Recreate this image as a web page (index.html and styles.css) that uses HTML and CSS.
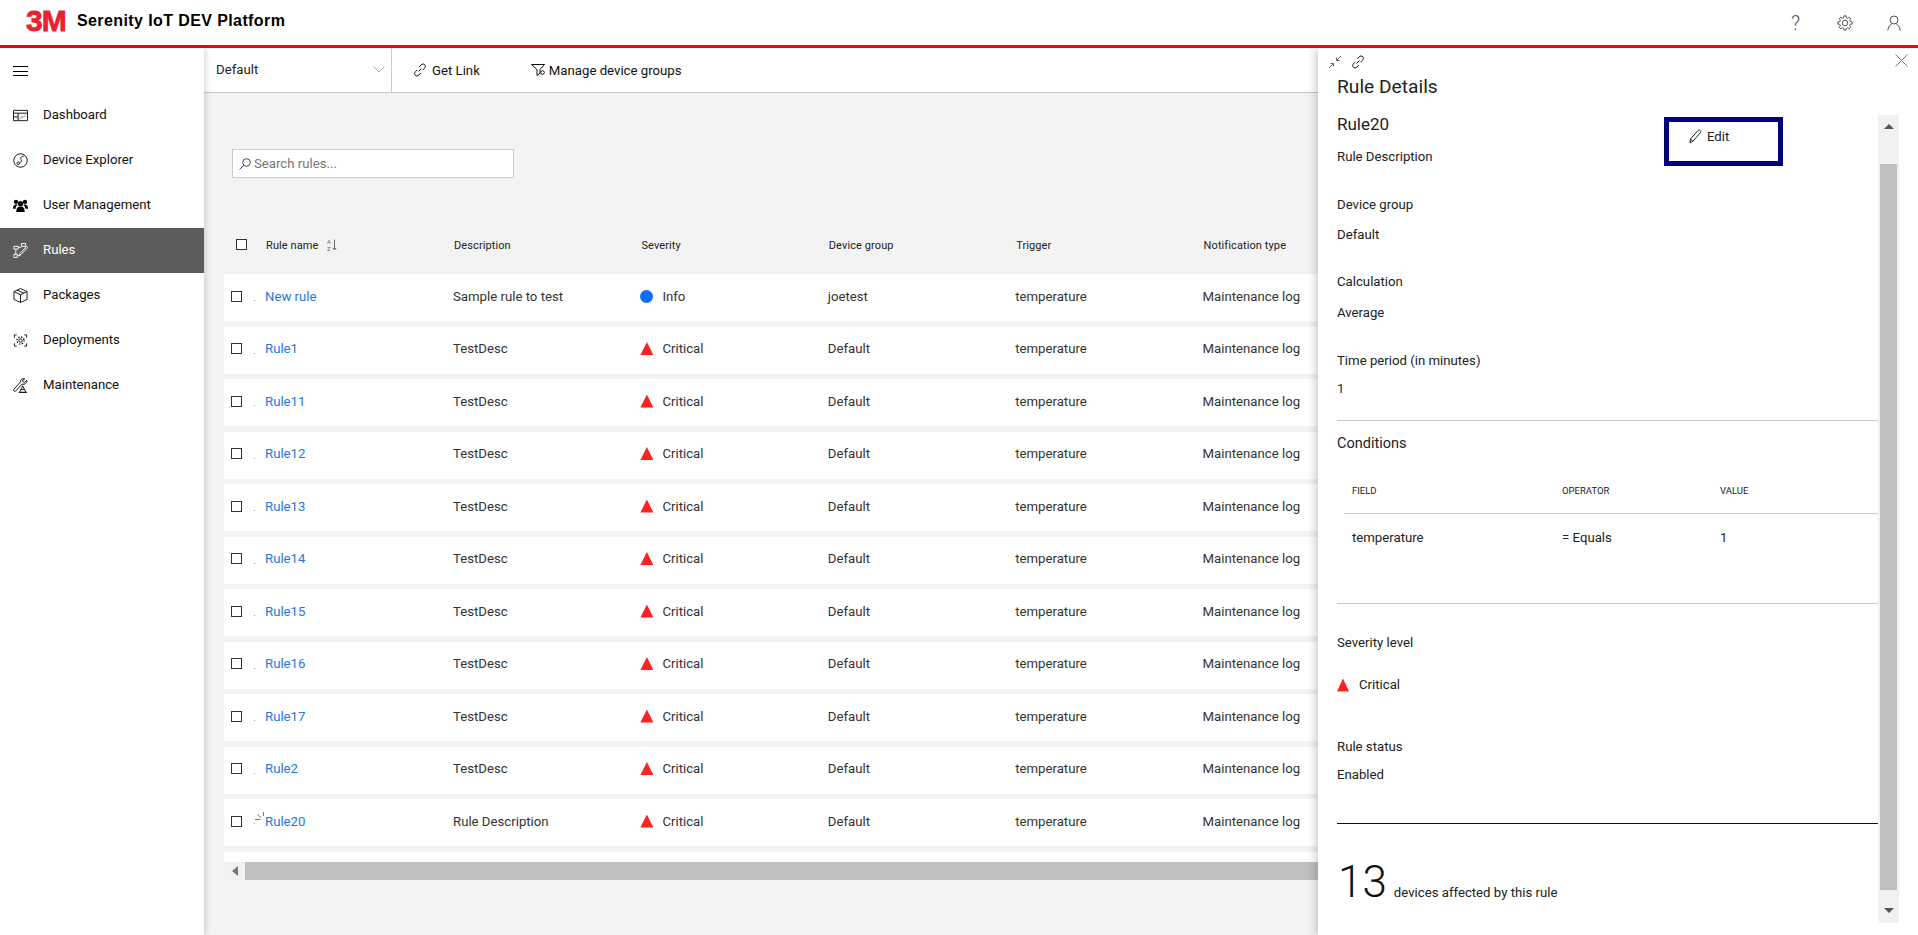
FILE: index.html
```html
<!DOCTYPE html>
<html lang="en">
<head>
  <meta charset="UTF-8">
  <meta name="viewport" content="width=device-width, initial-scale=1.0">
  <title>Serenity IoT DEV Platform</title>
  <link rel="stylesheet" href="styles.css">
</head>
<body>
  <header class="topbar">
    <span class="logo">3M</span>
    <span class="app-title">Serenity IoT DEV Platform</span>
    <div class="top-icons">
      <span class="help">?</span>
      <svg class="gear" width="16" height="16" viewBox="0 0 16 16"><polygon points="6.69,2.76 6.87,.89 9.13,.89 9.31,2.76 10.78,3.37 12.23,2.18 13.82,3.77 12.63,5.22 13.24,6.69 15.11,6.87 15.11,9.13 13.24,9.31 12.63,10.78 13.82,12.23 12.23,13.82 10.78,12.63 9.31,13.24 9.13,15.11 6.87,15.11 6.69,13.24 5.22,12.63 3.77,13.82 2.18,12.23 3.37,10.78 2.76,9.31 .89,9.13 .89,6.87 2.76,6.69 3.37,5.22 2.18,3.77 3.77,2.18 5.22,3.37"/><circle cx="8" cy="8" r="2.8"/></svg>
      <svg class="user" width="14" height="16" viewBox="0 0 14 16"><circle cx="7" cy="5" r="4"/><path d="M.8 15.5c.3-3.6 2.2-6 4-6.6M13.2 15.5c-.3-3.6-2.2-6-4-6.6"/></svg>
    </div>
  </header>

  <div class="layout">
    <nav class="sidebar">
      <div class="menu-btn"><span></span><span></span><span></span></div>
      <a class="nav-item">
        <svg class="nav-icon" viewBox="0 0 16 16"><path d="M.5 2.5h15v11H.5zM.5 5.5h15M5.5 5.5v8M.5 9.5h5"/><path class="soft" d="M7 12l2.5-3 1.5 1 3-3"/></svg>
        Dashboard
      </a>
      <a class="nav-item">
        <svg class="nav-icon" viewBox="0 0 16 16"><circle cx="8" cy="8" r="7.2"/><path d="M11.5 3.4C9 3.3 7.4 5 8.6 6.8c.9 1.5.2 3.1-1.6 3.4"/><circle cx="5.6" cy="11" r="1.4"/></svg>
        Device Explorer
      </a>
      <a class="nav-item">
        <svg class="nav-icon filled" viewBox="0 0 16 16"><circle cx="8" cy="6" r="2.8"/><circle cx="3.2" cy="4.2" r="2.3"/><circle cx="12.8" cy="4.2" r="2.3"/><path d="M3.5 15c0-4.4 1.6-6 4.5-6s4.5 1.6 4.5 6zM0 11.5C0 8.3 1.2 7 3.2 7c.7 0 1.2.1 1.7.5-1.3.9-2 2.2-2.1 4zM16 11.5C16 8.300 14.800 7 12.800 7c-.7 0-1.200.1-1.700.5 1.300.9 2 2.200 2.100 4z"/></svg>
        User Management
      </a>
      <a class="nav-item active">
        <svg class="nav-icon" viewBox="0 0 16 16"><path d="M9 .5h4.500v3H9zM1 3.500h4.500v3H1zM1 12h3.500v3.500H1zM5.500 4.500H9M3 6.500V12M4.500 13.500H8"/><path d="M7.500 11l7-7.500 1.200 1.200-7 7.500-2 .7z"/></svg>
        Rules
      </a>
      <a class="nav-item">
        <svg class="nav-icon" viewBox="0 0 16 16"><path d="M8 .6l7 3.200v8.400l-7 3.200-7-3.200V3.800zM1 3.800l7 3.400 7-3.400M8 7.200v8.200M4.500 2.200L11.500 5.500"/></svg>
        Packages
      </a>
      <a class="nav-item">
        <svg class="nav-icon" viewBox="0 0 16 16"><path d="M1.500 5V2H4M12 2h2.500v3M1.500 11v3H4M12 14h2.500v-3"/><circle cx="8" cy="8" r="1.800"/><circle class="dashed" cx="8" cy="8" r="3.800"/></svg>
        Deployments
      </a>
      <a class="nav-item">
        <svg class="nav-icon" viewBox="0 0 16 16"><path d="M14.800 2.600l-2.400 2-1.800-.5-.4-1.800L12.500 1C10 0 7.800 1.500 8 4.200L.8 12.200c-.8 1 .8 2.900 2 1.800l6.800-7.500c2.700.8 5.700-1 5.200-3.900z"/><path d="M7 15.300l3.300-7 3.400 7zM6 15.300h9M8.500 12.200h3.600"/></svg>
        Maintenance
      </a>
    </nav>

    <main class="main">
      <div class="toolbar">
        <div class="group-select">
          <span>Default</span>
          <svg width="12" height="7" viewBox="0 0 12 7"><path d="M.5.500L6 6l5.500-5.500"/></svg>
        </div>
        <a class="tool-link">
          <svg class="link-icon" width="14" height="14" viewBox="0 0 14 14"><path d="M5.500 8.500L8.500 5.500M6.200 3.800l2-2c1-1 2.600-1 3.500-.1s.9 2.500-.1 3.500l-2 2M7.800 10.200l-2 2c-1 1-2.600 1-3.500.1s-.9-2.500.1-3.500l2-2"/></svg>
          Get Link
        </a>
        <a class="tool-link manage">
          <svg class="link-icon" width="15" height="14" viewBox="0 0 15 14"><path d="M.5 1.500h13L9 6.500v3.800l-3 2.200V6.500z"/><circle cx="11.500" cy="9.500" r="1.800"/></svg>
          Manage device groups
        </a>
      </div>

      <div class="search-box">
        <svg width="12" height="12" viewBox="0 0 12 12"><circle cx="7.500" cy="4.500" r="3.800"/><path d="M4.800 7.200L.6 11.400"/></svg>
        <input type="text" placeholder="Search rules...">
      </div>

      <div class="rules-table">
        <div class="table-head">
          <span class="check-cell"><i class="check"></i></span>
          <span class="name-head">Rule name
            <svg class="sort-icon" width="10" height="12" viewBox="0 0 10 12"><text x="0" y="5" font-size="6">A</text><text x="0" y="11.500" font-size="6">Z</text><path d="M7.500.500v10.500M5.800 9l1.700 2 1.700-2"/></svg>
          </span>
          <span>Description</span>
          <span>Severity</span>
          <span>Device group</span>
          <span>Trigger</span>
          <span>Notification type</span>
        </div>

        <div class="rule-row">
          <span class="check-cell"><i class="check"></i><b class="dot-mark"></b></span>
          <a class="rule-link">New rule</a>
          <span>Sample rule to test</span>
          <span class="severity"><i class="sev-info"></i>Info</span>
          <span>joetest</span><span>temperature</span><span>Maintenance log</span>
        </div>
        <div class="rule-row">
          <span class="check-cell"><i class="check"></i><b class="dot-mark"></b></span>
          <a class="rule-link">Rule1</a>
          <span>TestDesc</span>
          <span class="severity"><i class="sev-critical"></i>Critical</span>
          <span>Default</span><span>temperature</span><span>Maintenance log</span>
        </div>
        <div class="rule-row">
          <span class="check-cell"><i class="check"></i><b class="dot-mark"></b></span>
          <a class="rule-link">Rule11</a>
          <span>TestDesc</span>
          <span class="severity"><i class="sev-critical"></i>Critical</span>
          <span>Default</span><span>temperature</span><span>Maintenance log</span>
        </div>
        <div class="rule-row">
          <span class="check-cell"><i class="check"></i><b class="dot-mark"></b></span>
          <a class="rule-link">Rule12</a>
          <span>TestDesc</span>
          <span class="severity"><i class="sev-critical"></i>Critical</span>
          <span>Default</span><span>temperature</span><span>Maintenance log</span>
        </div>
        <div class="rule-row">
          <span class="check-cell"><i class="check"></i><b class="dot-mark"></b></span>
          <a class="rule-link">Rule13</a>
          <span>TestDesc</span>
          <span class="severity"><i class="sev-critical"></i>Critical</span>
          <span>Default</span><span>temperature</span><span>Maintenance log</span>
        </div>
        <div class="rule-row">
          <span class="check-cell"><i class="check"></i><b class="dot-mark"></b></span>
          <a class="rule-link">Rule14</a>
          <span>TestDesc</span>
          <span class="severity"><i class="sev-critical"></i>Critical</span>
          <span>Default</span><span>temperature</span><span>Maintenance log</span>
        </div>
        <div class="rule-row">
          <span class="check-cell"><i class="check"></i><b class="dot-mark"></b></span>
          <a class="rule-link">Rule15</a>
          <span>TestDesc</span>
          <span class="severity"><i class="sev-critical"></i>Critical</span>
          <span>Default</span><span>temperature</span><span>Maintenance log</span>
        </div>
        <div class="rule-row">
          <span class="check-cell"><i class="check"></i><b class="dot-mark"></b></span>
          <a class="rule-link">Rule16</a>
          <span>TestDesc</span>
          <span class="severity"><i class="sev-critical"></i>Critical</span>
          <span>Default</span><span>temperature</span><span>Maintenance log</span>
        </div>
        <div class="rule-row">
          <span class="check-cell"><i class="check"></i><b class="dot-mark"></b></span>
          <a class="rule-link">Rule17</a>
          <span>TestDesc</span>
          <span class="severity"><i class="sev-critical"></i>Critical</span>
          <span>Default</span><span>temperature</span><span>Maintenance log</span>
        </div>
        <div class="rule-row">
          <span class="check-cell"><i class="check"></i><b class="dot-mark"></b></span>
          <a class="rule-link">Rule2</a>
          <span>TestDesc</span>
          <span class="severity"><i class="sev-critical"></i>Critical</span>
          <span>Default</span><span>temperature</span><span>Maintenance log</span>
        </div>
        <div class="rule-row">
          <span class="check-cell"><i class="check"></i>
            <svg class="spinner" width="12" height="14" viewBox="0 0 12 14"><path d="M1 12.500h.6M2 8.500h5.500M4.500 3.500L8 6.500M10.500 1v4"/></svg>
          </span>
          <a class="rule-link">Rule20</a>
          <span>Rule Description</span>
          <span class="severity"><i class="sev-critical"></i>Critical</span>
          <span>Default</span><span>temperature</span><span>Maintenance log</span>
        </div>

        <div class="table-end"></div>
        <div class="h-scroll">
          <span class="arrow-left"></span>
          <span class="h-thumb"></span>
        </div>
      </div>

      <!-- details panel slides over the table -->
      <aside class="details-panel">
        <div class="panel-tools">
          <svg class="collapse" width="14" height="14" viewBox="0 0 14 14"><path d="M13 1L8.500 5.500M8.500 2.500v3h3M1 13l4.500-4.500M2.500 8.500h3v3"/></svg>
          <svg class="panel-link" width="14" height="14" viewBox="0 0 14 14"><path d="M5.500 8.500L8.500 5.500M6.200 3.800l2-2c1-1 2.600-1 3.500-.1s.9 2.500-.1 3.500l-2 2M7.800 10.200l-2 2c-1 1-2.600 1-3.500.1s-.9-2.500.1-3.500l2-2"/></svg>
          <svg class="close" width="13" height="13" viewBox="0 0 13 13"><path d="M.5.500l12 12M12.500.500l-12 12"/></svg>
        </div>
        <h2>Rule Details</h2>
        <div class="panel-body">
          <div class="panel-content">
            <div class="rule-title">
              <div class="rule-title-text">
                <h3>Rule20</h3>
                <p class="rule-desc">Rule Description</p>
              </div>
              <button class="edit-btn">
                <svg width="13" height="15" viewBox="0 0 13 15"><path d="M1.500 10L9 1.500c.6-.6 1.500-.6 2.200 0s.8 1.500.2 2.200l-7.500 8.500L1 14z"/><path d="M1.500 10l2.400 2.200"/></svg>
                Edit
              </button>
            </div>

            <p class="field-label">Device group</p>
            <p class="field-value">Default</p>
            <p class="field-label next">Calculation</p>
            <p class="field-value wide">Average</p>
            <p class="field-label">Time period (in minutes)</p>
            <p class="field-value tight">1</p>
            <hr class="divider first">

            <p class="section-title">Conditions</p>
            <div class="cond-grid cond-head">
              <span>FIELD</span><span>OPERATOR</span><span>VALUE</span>
            </div>
            <div class="cond-grid cond-row">
              <span>temperature</span><span>= Equals</span><span>1</span>
            </div>
            <hr class="divider second">

            <p class="field-label">Severity level</p>
            <p class="panel-severity"><i class="sev-critical small"></i>Critical</p>
            <p class="field-label status">Rule status</p>
            <p class="field-value tight">Enabled</p>
            <hr class="divider dark">

            <p class="affected"><span class="count">13</span><span class="affected-text">devices affected by this rule</span></p>
          </div>
          <div class="v-scroll">
            <span class="arrow-up"></span>
            <span class="v-thumb"></span>
            <span class="arrow-down"></span>
          </div>
        </div>
      </aside>
    </main>
  </div>
</body>
</html>
```

FILE: styles.css
```css
/* General Reset */
* {
  margin: 0;
  padding: 0;
  box-sizing: border-box;
}

body {
  height: 100vh;
  font-family: Roboto, 'Liberation Sans', sans-serif;
  font-size: 13.2px;
  color: #222;
  background: #fff;
  overflow: hidden;
}

svg {
  fill: none;
  stroke: currentColor;
  stroke-width: 1;
  flex: none;
}

/* Top bar */
.topbar {
  height: 48px;
  display: flex;
  align-items: center;
  padding: 0 17px 3px 26px;
  border-bottom: 3px solid #f00;
  background: #fff;
}

.logo {
  width: 51px;
  font-family: 'Liberation Sans', sans-serif;
  font-size: 30px;
  font-weight: bold;
  letter-spacing: -1px;
  line-height: 22px;
  color: #e8222e;
  -webkit-text-stroke: 0.8px #e8222e;
}

.app-title {
  font-family: 'Liberation Sans', sans-serif;
  font-size: 16px;
  font-weight: bold;
  letter-spacing: 0.4px;
  color: #000;
}

.top-icons {
  margin: 4px 0 0 auto;
  display: flex;
  align-items: center;
  color: #555;
}

.help {
  font-size: 20px;
  font-weight: 300;
  line-height: 20px;
}

.gear {
  margin-left: 37px;
}

.user {
  margin-left: 34px;
}

/* Layout */
.layout {
  display: flex;
  height: calc(100vh - 48px);
}

.sidebar {
  width: 204px;
  flex: none;
  background: #fff;
  box-shadow: 2px 0 6px rgba(0, 0, 0, 0.15);
  position: relative;
  z-index: 1;
}

.menu-btn {
  height: 45px;
  padding: 18px 0 0 13px;
}

.menu-btn span {
  display: block;
  width: 15px;
  height: 1px;
  margin-bottom: 3.5px;
  background: #000;
}

.nav-item {
  height: 45px;
  display: flex;
  align-items: center;
  padding: 0 0 3px 13px;
  color: #111;
}

.nav-icon {
  width: 15px;
  height: 15px;
  margin: 3px 15px 0 0;
  color: #111;
}

.nav-icon .soft {
  stroke: #888;
}

.nav-icon .dashed {
  stroke-dasharray: 1.5 1.5;
  stroke-width: 1.4;
}

.nav-icon.filled {
  fill: #000;
  stroke: none;
}

.nav-item.active {
  background: #5c5c5c;
  color: #fff;
}

.nav-item.active .nav-icon {
  color: #fff;
}

/* Main area */
.main {
  flex: 1;
  position: relative;
  background: #f3f3f3;
  overflow: hidden;
}

.toolbar {
  height: 45px;
  display: flex;
  align-items: center;
  background: #fff;
  border-bottom: 1px solid #c8c8c8;
}

.group-select {
  width: 188px;
  height: 44px;
  display: flex;
  align-items: center;
  justify-content: space-between;
  padding: 0 6px 1px 12px;
  border-right: 1px solid #ccc;
}

.group-select svg {
  color: #aaa;
}

.tool-link {
  display: flex;
  align-items: center;
  gap: 5px;
  margin-left: 21px;
  color: #111;
}

.tool-link.manage {
  margin-left: 51px;
  gap: 3px;
}

.search-box {
  width: 282px;
  height: 29px;
  margin: 56px 0 0 28px;
  display: flex;
  align-items: center;
  gap: 3px;
  padding-left: 6px;
  background: #fff;
  border: 1px solid #ccc;
}

.search-box svg {
  color: #444;
}

.search-box input {
  flex: 1;
  min-width: 0;
  border: none;
  outline: none;
  font: inherit;
  color: #222;
}

.search-box input::placeholder {
  color: #777;
}

/* Rules table */
.rules-table {
  margin: 52px 0 0 20px;
  display: flex;
  flex-direction: column;
  gap: 5.5px;
}

.table-head,
.rule-row {
  display: grid;
  grid-template-columns: 41px 188px repeat(4, 187.4px) 1fr;
  align-items: center;
}

.table-head {
  height: 30px;
  margin-bottom: 8.5px;
  font-size: 11px;
  letter-spacing: 0.1px;
  color: #222;
}

.table-head span:not(.check-cell) {
  padding-left: 1px;
}

.table-head .name-head {
  padding-left: 3px;
}

.table-head .check-cell {
  padding: 0 0 2px 12px;
}

.sort-icon {
  margin-left: 6px;
  vertical-align: -2px;
  color: #666;
}

.sort-icon text {
  font-family: Roboto, sans-serif;
  fill: #666;
  stroke: none;
}

.rule-row {
  height: 47px;
  padding-bottom: 3px;
  background: #fff;
  color: #333;
}

.check-cell {
  display: flex;
  align-items: center;
  padding-left: 7px;
  position: relative;
}

.check {
  display: block;
  width: 11px;
  height: 11px;
  border: 1px solid #333;
  background: #fff;
}

.dot-mark {
  width: 1px;
  height: 1px;
  margin: 9px 0 0 12px;
  background: #999;
}

.spinner {
  position: absolute;
  left: 29px;
  top: -5px;
  color: #777;
}

.rule-link {
  color: #1f78e0;
}

.severity {
  display: flex;
  align-items: center;
  gap: 9px;
}

.sev-info {
  width: 13px;
  height: 13px;
  border-radius: 50%;
  background: #126cf5;
}

.sev-critical {
  width: 13px;
  height: 13px;
  background: #ff2222;
  clip-path: polygon(50% 0, 100% 100%, 0 100%);
}

.sev-critical.small {
  width: 12px;
}

.table-end {
  height: 10px;
  margin-bottom: -5.5px;
  background: #fff;
}

.h-scroll {
  height: 18px;
  display: flex;
  align-items: center;
  background: #f1f1f1;
}

.arrow-left {
  width: 0;
  margin: 0 7px 0 8px;
  border: 5px solid transparent;
  border-left: 0;
  border-right: 6px solid #777;
}

.h-thumb {
  flex: 1;
  height: 18px;
  background: #bfbfbf;
}

/* Details panel */
.details-panel {
  position: absolute;
  top: 0;
  right: 0;
  bottom: 0;
  width: 600px;
  padding-left: 19px;
  background: #fff;
  box-shadow: -3px 0 8px rgba(0, 0, 0, 0.18);
  color: #222;
}

.panel-tools {
  height: 28px;
  display: flex;
  align-items: center;
  padding-right: 10px;
}

.collapse {
  margin-left: -9px;
  color: #666;
}

.panel-link {
  margin-left: 9px;
  color: #111;
}

.close {
  margin: -4px 0 0 auto;
  color: #777;
}

.details-panel h2 {
  padding-top: 2px;
  font-size: 19.2px;
  font-weight: normal;
  line-height: 18px;
  height: 20px;
}

.panel-body {
  display: flex;
  margin-top: 19px;
}

.panel-content {
  width: 541px;
  flex: none;
}

/* 20px text rows, text sits 1px low in the row */
.panel-content p,
.cond-row {
  padding-top: 2px;
  line-height: 18px;
}

.rule-title {
  display: flex;
  align-items: flex-start;
}

.rule-title-text {
  width: 327px;
}

.rule-title h3 {
  font-size: 17px;
  font-weight: normal;
  line-height: 18px;
}

.rule-desc {
  margin-top: 13px;
}

.edit-btn {
  width: 119px;
  height: 49px;
  margin-top: 2px;
  display: flex;
  align-items: flex-start;
  gap: 5px;
  padding: 7px 0 0 20px;
  font: inherit;
  line-height: 16px;
  color: #222;
  background: #fff;
  border: 5px solid #000080;
}

.field-label {
  margin-top: 28px;
}

.field-label.next {
  margin-top: 27px;
}

.field-label.status {
  margin-top: 42px;
}

.field-value {
  margin-top: 10px;
}

.field-value.wide {
  margin-top: 11px;
}

.field-value.tight {
  margin-top: 8px;
}

.divider {
  border: none;
  height: 1px;
  background: #c8c8c8;
}

.divider.first {
  margin-top: 22px;
}

.divider.second {
  margin-top: 56px;
}

.divider.dark {
  margin-top: 39px;
  background: #111;
}

.section-title {
  margin-top: 12px;
  font-size: 14.5px;
}

.cond-grid {
  display: grid;
  grid-template-columns: 210px 158px 1fr;
  padding-left: 15px;
}

.cond-head {
  height: 31px;
  margin: 30px 0 0 7px;
  padding: 1px 0 0 8px;
  font-size: 9.5px;
  line-height: 14px;
  border-bottom: 1px solid #c8c8c8;
}

.cond-row {
  margin-top: 13px;
}

.panel-severity {
  margin-top: 22px;
  display: flex;
  align-items: center;
  gap: 10px;
}

.panel-content .affected {
  margin-top: 33px;
  padding-top: 0;
  line-height: 50px;
  display: flex;
  align-items: flex-end;
  gap: 7px;
}

.count {
  margin-left: 1px;
  font-size: 44px;
  font-weight: 300;
  color: #111;
}

.affected-text {
  line-height: 29px;
}

.v-scroll {
  width: 21px;
  height: 808px;
  display: flex;
  flex-direction: column;
  align-items: center;
  background: #f1f1f1;
}

.arrow-up,
.arrow-down {
  width: 0;
  border: 5px solid transparent;
  border-top: 0;
  border-bottom: 5px solid #555;
  margin: 9px 0 0;
}

.arrow-down {
  border-bottom: 0;
  border-top: 5px solid #555;
  margin: 18px 0 0;
}

.v-thumb {
  width: 17px;
  height: 726px;
  margin-top: 35px;
  background: #bfbfbf;
}
```
